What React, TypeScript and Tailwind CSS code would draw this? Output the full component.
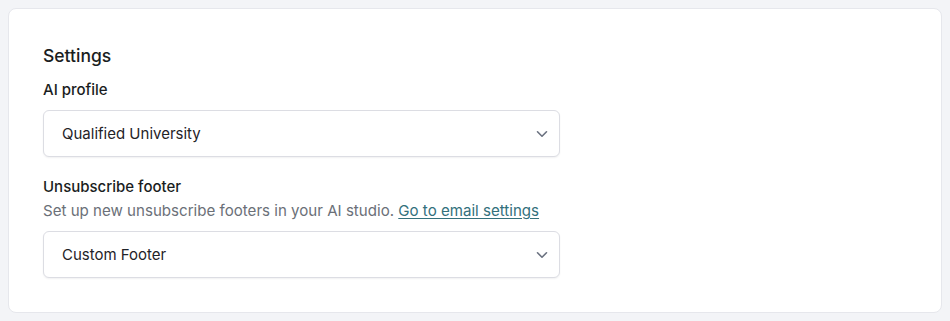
import type { FC } from 'react';

const Chevron: FC = () => (
  <svg width="12" height="8" viewBox="0 0 12 8" fill="none" className="shrink-0">
    <path d="M1.5 1.75L6 6.25L10.5 1.75" stroke="#6b7280" strokeWidth="1.6" strokeLinecap="round" strokeLinejoin="round" />
  </svg>
);

const SelectBox: FC<{ value: string }> = ({ value }) => (
  <button
    type="button"
    className="flex h-[47px] w-[517px] items-center justify-between rounded-md border border-[#dcdde3] bg-white pt-[1px] pl-[18px] pr-[11px] text-left text-[15px] text-[#1f2328] shadow-[0_1px_2px_rgba(16,24,40,0.06)]"
  >
    <span>{value}</span>
    <Chevron />
  </button>
);

export default function App() {
  return (
    <div className="min-h-[321px] bg-[#f3f4f7] p-2 font-['Inter',sans-serif]">
      <div className="h-[305px] rounded-lg border border-[#e6e7ec] bg-white px-[34px] pt-[34px]">
        <h2 className="text-[17.5px] leading-[26px] font-medium text-[#1a1d21]">Settings</h2>

        <div className="mt-[10px]">
          <p className="text-[15px] leading-[22px] font-medium text-[#1a1d21]">AI profile</p>
          <div className="mt-[9px]">
            <SelectBox value="Qualified University" />
          </div>
        </div>

        <div className="mt-[18px]">
          <p className="pt-[1px] text-[15px] leading-[22px] font-medium text-[#1a1d21]">Unsubscribe footer</p>
          <p className="mt-[2px] text-[15.1px] leading-[22px] text-[#6b7078]">
            Set up new unsubscribe footers in your AI studio.{' '}
            <a href="#" className="text-[#33707c] underline decoration-[#33707c] underline-offset-2">
              Go to email settings
            </a>
          </p>
          <div className="mt-[9px]">
            <SelectBox value="Custom Footer" />
          </div>
        </div>
      </div>
    </div>
  );
}
